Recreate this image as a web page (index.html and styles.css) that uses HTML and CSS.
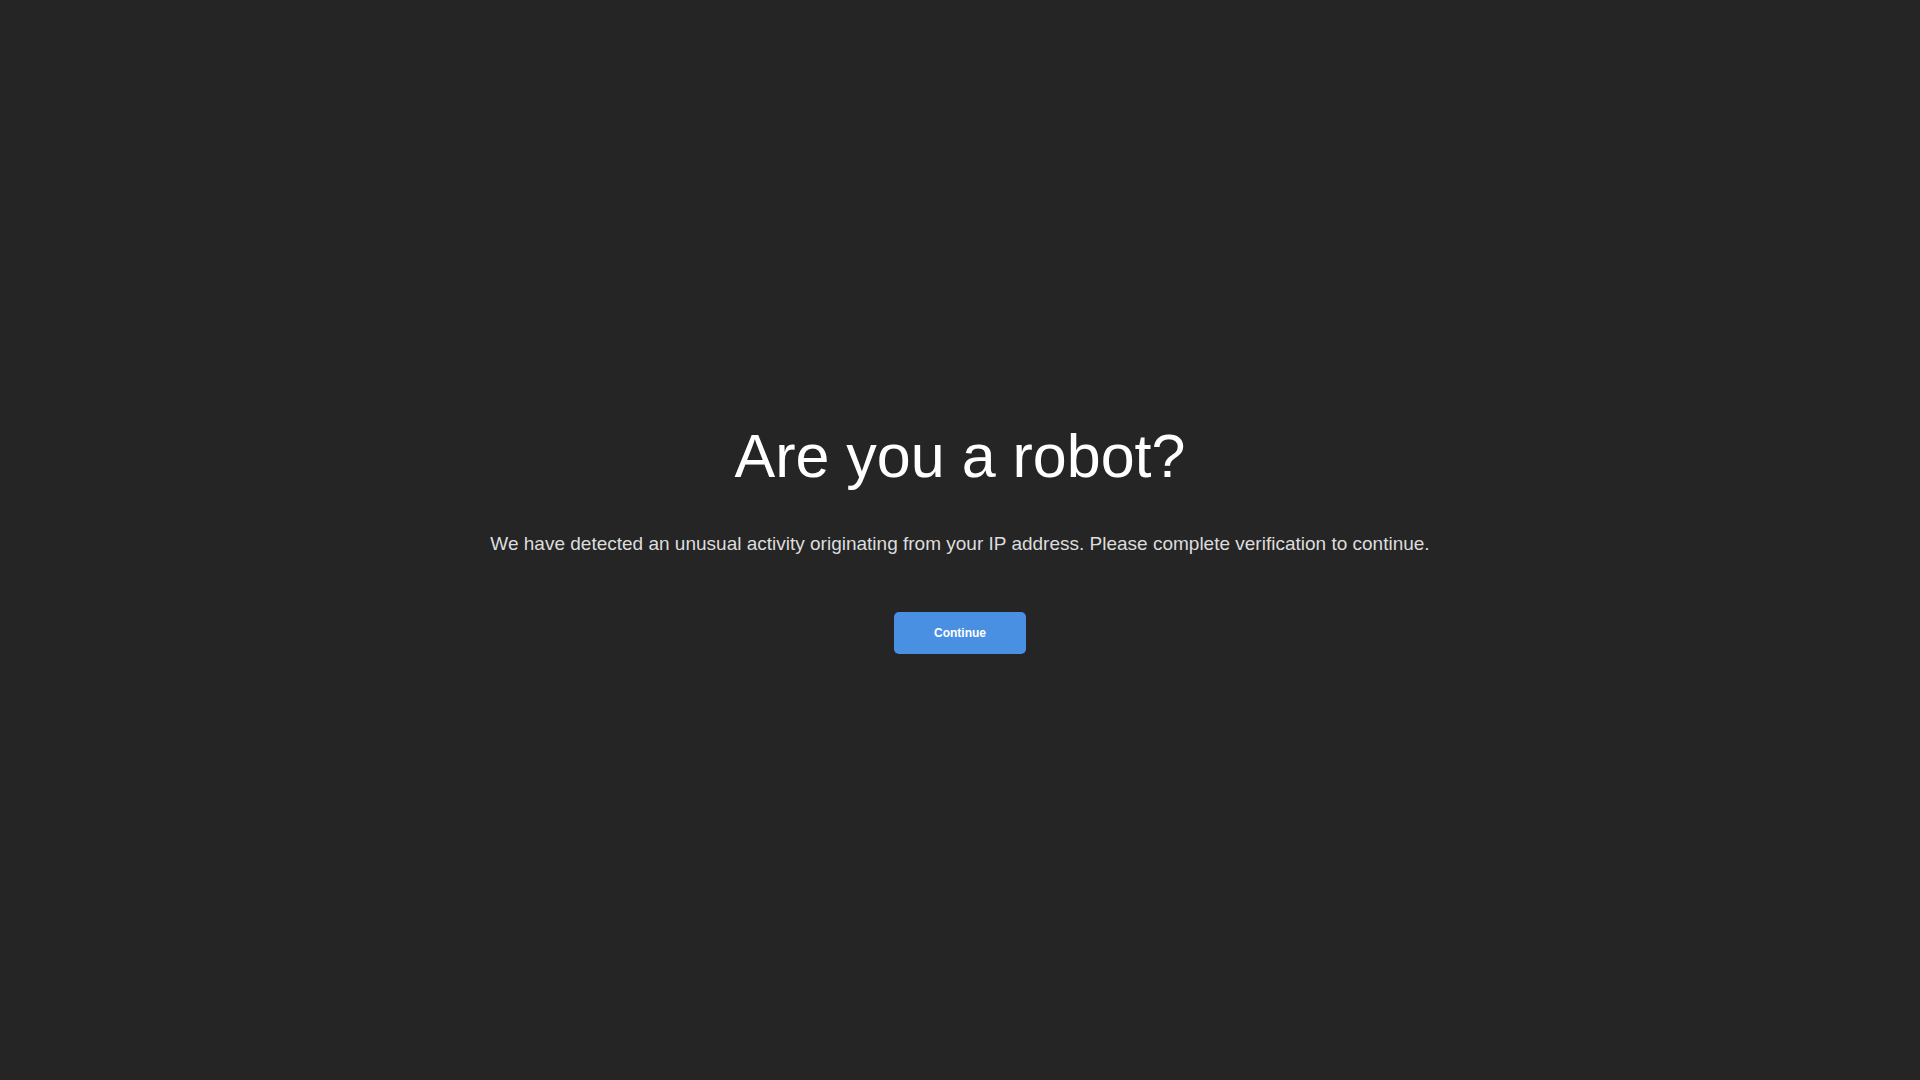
FILE: index.html
```html
<!DOCTYPE html>
<html lang="en">
<head>
<meta charset="utf-8">
<title>Are you a robot?</title>
<link rel="stylesheet" href="styles.css">
</head>
<body>
<main class="page">
  <div class="content">
    <h1 class="title">Are you a robot?</h1>
    <p class="message">We have detected an unusual activity originating from your IP address. Please complete verification to continue.</p>
    <button class="btn" type="button">Continue</button>
  </div>
</main>
</body>
</html>
```

FILE: styles.css
```css
html, body {
  margin: 0;
  padding: 0;
  background: #252525;
  font-family: "Liberation Sans", Arial, sans-serif;
}
.page {
  min-height: 100vh;
  box-sizing: border-box;
  padding-bottom: 5px;
  display: flex;
  align-items: center;
  justify-content: center;
}
.content {
  display: flex;
  flex-direction: column;
  align-items: center;
  text-align: center;
}
.title {
  margin: 0 0 42px;
  font-size: 61px;
  font-weight: normal;
  color: #ffffff;
}
.message {
  margin: 0 0 57px;
  font-size: 19px;
  color: #dddddd;
}
.btn {
  font-family: "Liberation Sans", Arial, sans-serif;
  font-size: 12px;
  font-weight: bold;
  color: #ffffff;
  background: #4a90e2;
  border: none;
  border-radius: 5px;
  padding: 14px 40px;
  cursor: pointer;
}
```
